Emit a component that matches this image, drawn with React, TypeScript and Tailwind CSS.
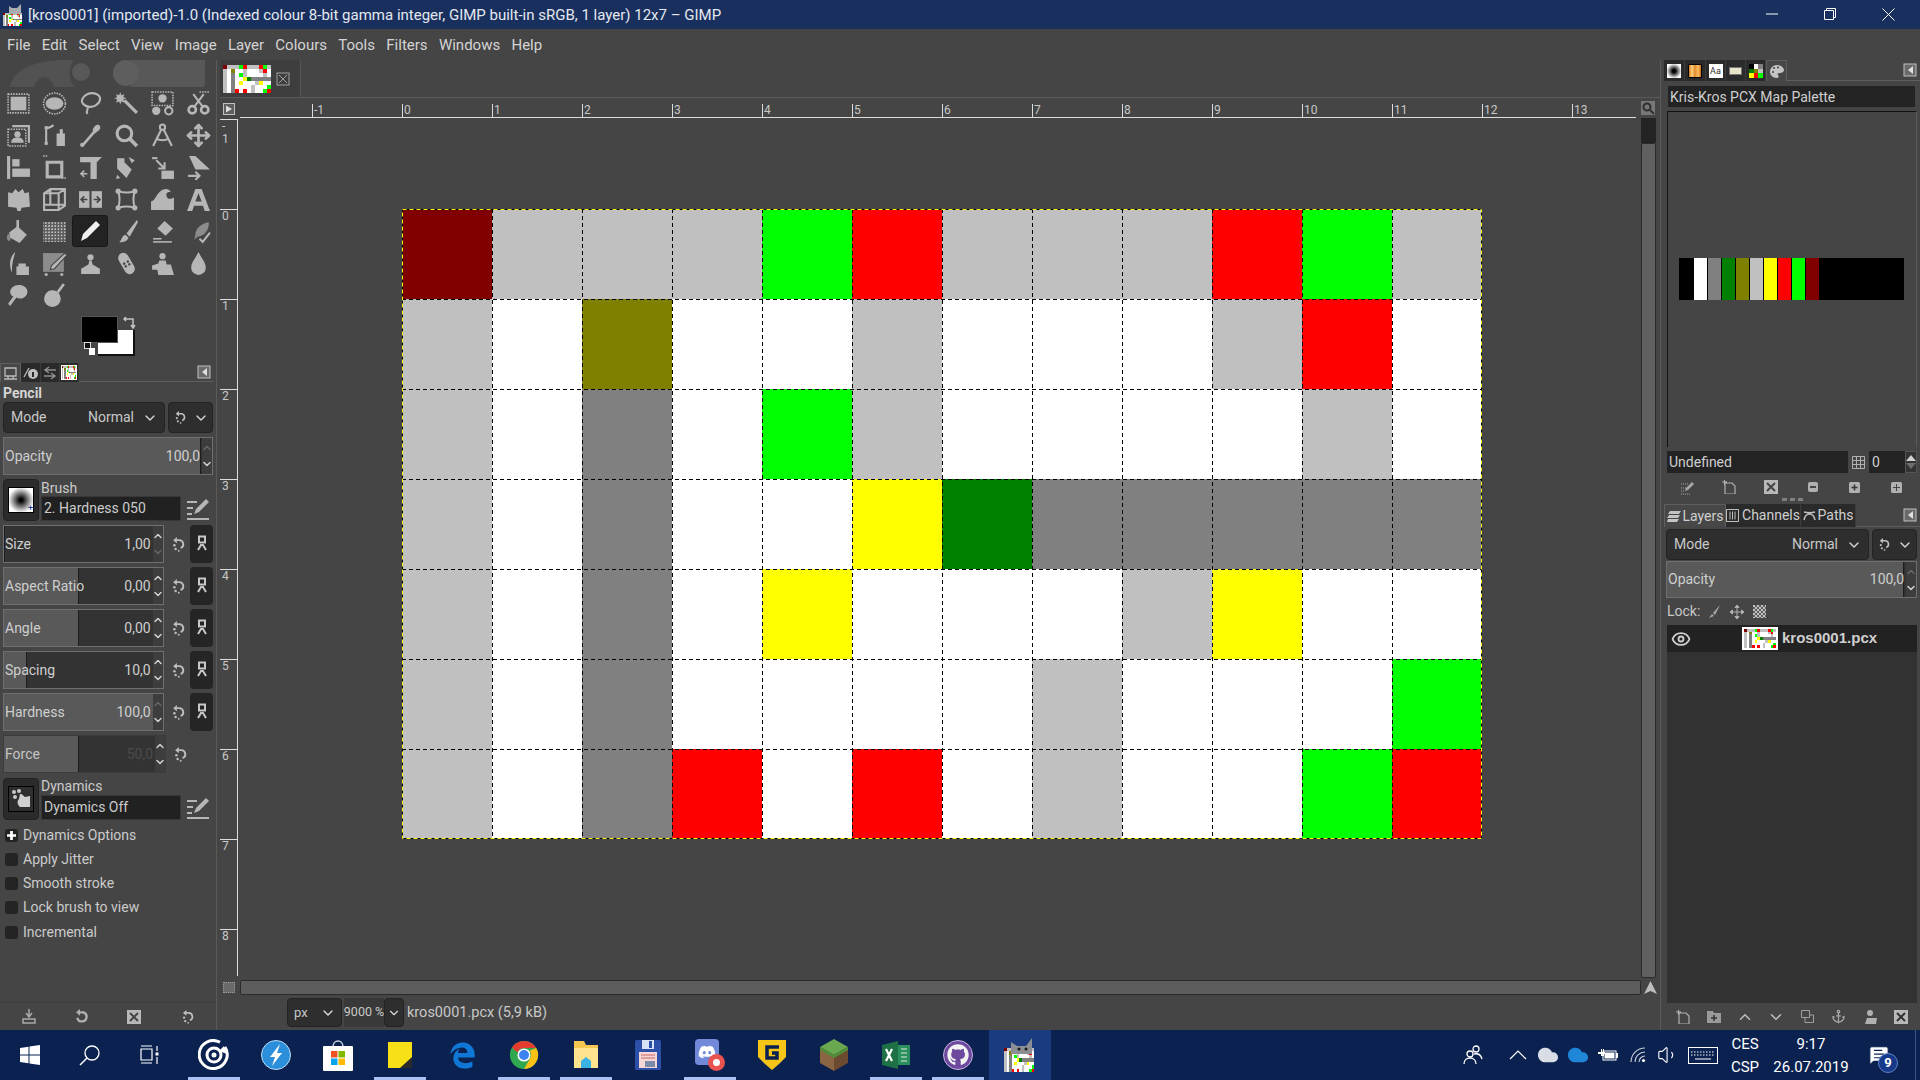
import React from "react";
import { ChevronDown, ChevronUp, Move, Eye, Cloud, Volume1, MessageSquareText, Anchor } from "lucide-react";
import { FaEdgeLegacy, FaDiscord, FaGithub } from "react-icons/fa6";

const M = "#800000", S = "#c0c0c0", W = "#ffffff", L = "#00ff00", R = "#ff0000", O = "#808000", A = "#808080", Y = "#ffff00", N = "#008000";

const MAP = [
  [M, S, S, S, L, R, S, S, S, R, L, S],
  [S, W, O, W, W, S, W, W, W, S, R, W],
  [S, W, A, W, L, S, W, W, W, W, S, W],
  [S, W, A, W, W, Y, N, A, A, A, A, A],
  [S, W, A, W, Y, W, W, W, S, Y, W, W],
  [S, W, A, W, W, W, W, S, W, W, W, L],
  [S, W, A, R, W, R, W, S, W, W, L, R],
];

const PALETTE = ["#000000", W, A, N, O, S, Y, R, L, M];
const MENU = ["File", "Edit", "Select", "View", "Image", "Layer", "Colours", "Tools", "Filters", "Windows", "Help"];
const G = "#b6b6b6";

// small picture of the map, used for the tab, the layer row and the taskbar
function Thumb({ w, h }: { w: number; h: number }) {
  return (
    <svg width={w} height={h} viewBox="0 0 12 7" preserveAspectRatio="none" shapeRendering="crispEdges" className="block shrink-0">
      {MAP.map((row, y) => row.map((c, x) => <rect key={`${x}-${y}`} x={x} y={y} width="1" height="1" fill={c} />))}
    </svg>
  );
}

function Ic({ children, size = 26 }: { children: React.ReactNode; size?: number }) {
  return (
    <svg viewBox="0 0 24 24" width={size} height={size} fill={G} className="block shrink-0">
      {children}
    </svg>
  );
}

const line = { fill: "none", stroke: G, strokeWidth: 2 };
const dash = { fill: "none", stroke: G, strokeWidth: 1.5, strokeDasharray: "1.5 1" };

const TOOLS: React.ReactNode[] = [
  <><rect x="2" y="3" width="20" height="18" {...dash} /><rect x="4.5" y="5.5" width="15" height="13" /></>,
  <><ellipse cx="12" cy="12" rx="8.5" ry="6" /><ellipse cx="12" cy="12" rx="10.5" ry="10" {...dash} /></>,
  <><path d="M13 2c6 0 9 3 8 7s-6 7-11 6-7-4-6-7 5-6 9-6z" {...line} /><path d="M9 15c2 2-2 3 0 7" {...line} /></>,
  <><path d="M10 9l12 12" stroke={G} strokeWidth="3" /><path d="M6 1l1 3 3-1-1 3 3 1-3 1 1 3-3-1-1 3-1-3-3 1 1-3-3-1 3-1-1-3 3 1z" /></>,
  <><rect x="2" y="1" width="20" height="13" {...dash} /><circle cx="12" cy="7" r="4" /><circle cx="6" cy="19" r="4" /><circle cx="18" cy="19" r="3.5" {...line} /></>,
  <><circle cx="6" cy="18" r="3.5" fill="none" stroke={G} strokeWidth="2.5" /><circle cx="18" cy="18" r="3.5" fill="none" stroke={G} strokeWidth="2.5" /><path d="M8 15L17 3M16 15L7 3" stroke={G} strokeWidth="2" /><path d="M13 1h10" {...dash} /></>,

  <><rect x="2" y="6" width="17" height="16" {...dash} /><path d="M6 3h16v16" {...line} /><circle cx="11" cy="11" r="3" /><path d="M5 19c0-4 3-5 6-5s6 1 6 5z" /></>,
  <><path d="M4 5v15M4 5c3 0 5-1 7-3" {...line} /><rect x="2.5" y="3" width="3" height="3" /><rect x="2.5" y="18" width="3" height="3" /><path d="M14 10h3V6h3v4h2v12h-8z" /></>,
  <><path d="M4 22L16 8" stroke={G} strokeWidth="2.5" /><path d="M14 7c1-4 4-6 6-5s2 4-1 6l-3 2z" /><circle cx="4" cy="21" r="2" /></>,
  <><circle cx="10" cy="10" r="7" fill="none" stroke={G} strokeWidth="3" /><path d="M15 15l7 7" stroke={G} strokeWidth="3.5" /></>,
  <><circle cx="12" cy="4" r="2.5" {...line} /><path d="M11 6L3 22M13 6l8 16" {...line} /><path d="M6 15c3 2 9 2 12 0" {...line} /></>,
  <Move size={24} color={G} strokeWidth={2.6} x={0} y={0} />,

  <><rect x="1" y="1" width="3" height="22" /><rect x="6" y="4" width="7" height="7" /><rect x="6" y="13" width="17" height="8" /></>,
  <><path d="M5 7h14v14H5z" fill="none" stroke={G} strokeWidth="3" /><path d="M1 1h5M19 22h4" {...dash} /></>,
  <><path d="M2 2h21l-5 5v16h-6V7H2z" /><path d="M2 18h7m-3-3l-3 3 3 3" stroke={G} fill="none" strokeWidth="1.5" /></>,
  <><path d="M3 3h7v4l7 7-5 8-9-9z" /><path d="M14 2l6 3-3 3zM3 19l3 3-4 1z" /></>,
  <><path d="M2 2h5v2H2z" /><path d="M6 5l8 8m0-6v6H8" {...line} /><rect x="11" y="15" width="12" height="8" /></>,
  <><path d="M3 1h6l14 13H9z" /><path d="M2 20h11m-4-4l4 4-4 4" {...line} /></>,

  <><path d="M2 5l4 1 3-4 3 3 4-3 2 4 4-1 1 14-8 1-1 3h-3l-1-3-8-1z" /></>,
  <><path d="M2 6l6-4h14v16l-6 4H2zM2 6h14v16M16 6l6-4M8 2v15H2M8 17h14" {...line} /></>,
  <><rect x="1" y="4" width="10" height="16" /><rect x="13" y="4" width="10" height="16" /><path d="M9 12H4m2-3l-3 3 3 3M15 12h5m-2-3l3 3-3 3" stroke="#454545" fill="none" strokeWidth="1.6" /></>,
  <><path d="M4 4c6 2 10 2 16 0-2 6-2 10 0 16-6-2-10-2-16 0 2-6 2-10 0-16z" {...line} /><circle cx="4" cy="4" r="2.5" /><circle cx="20" cy="4" r="2.5" /><circle cx="4" cy="20" r="2.5" /><circle cx="20" cy="20" r="2.5" /></>,
  <><path d="M1 22v-8c4-1 4-5 8-9 4-4 9-4 11 0-3-1-5 1-4 4s4 3 7 1v12z" /></>,
  <><path d="M9 2h6l8 21h-5l-1.700-5H7.700L6 23H1zM12 6l-3 8h6z" /></>,

  <><path d="M3 13l8-6 9 8-7 8-9-5z" /><rect x="10" y="1" width="2.500" height="12" /><path d="M2 14c-2 4-1 7 1 7s2-4-1-7z" fill="#8a8a8a" /></>,
  <><rect x="1" y="3" width="22" height="19" fill="url(#dith)" /><defs><pattern id="dith" width="3" height="3" patternUnits="userSpaceOnUse"><rect width="3" height="3" fill="#5e5e5e" /><rect width="1.500" height="1.500" fill="#c4c4c4" /></pattern></defs></>,
  <><path d="M18 2l4 4L9 19l-6 3 2-7z" fill="#f0f0f0" /></>,
  <><path d="M22 1L12 14l3 3L23 3z" /><path d="M11 15l3 3c-1 3-5 5-9 4 3-2 2-6 6-7z" /></>,
  <><path d="M14 2l8 7-7 7-8-7z" /><path d="M3 22h18" stroke={G} strokeWidth="1.500" /><path d="M3 19h8" stroke={G} strokeWidth="1.500" /></>,
  <><path d="M22 3c0 8-4 13-11 14l-3 3 1-5c0-6 6-11 13-12z" fill="#8c8c8c" /><path d="M13 19l3 3 7-9" {...line} /></>,

  <><path d="M9 1c-5 4-7 12-3 20-1-6 1-14 3-20z" /><path d="M12 12h7v3h3v8H10v-8h2z" /></>,
  <><path d="M1 2h20v18H1z" fill="#8c8c8c" /><path d="M22 2l2 2-12 13-4 1 1-4z" stroke="#454545" strokeWidth="1" /><circle cx="4" cy="22.500" r="1.500" /><circle cx="19" cy="22.500" r="1.500" /></>,
  <><circle cx="12" cy="6" r="3" /><path d="M11 9h2l1 4 7 4v5H3v-5l7-4z" /></>,
  <><g transform="rotate(-30 12 12)"><rect x="7" y="1" width="10" height="22" rx="5" /><circle cx="10" cy="11" r="1.200" fill="#454545" /><circle cx="14" cy="11" r="1.200" fill="#454545" /><circle cx="10" cy="14" r="1.200" fill="#454545" /><circle cx="14" cy="14" r="1.200" fill="#454545" /></g></>,
  <><circle cx="12" cy="5" r="3" /><path d="M9 9h6l1 4h4l3 10H8l-1-5H2v-4l6-2z" /></>,
  <><path d="M12 1c3 6 7 10 7 15a7 7 0 0 1-14 0c0-5 4-9 7-15z" /></>,

  <><path d="M4 9c0-5 5-8 10-7s8 5 6 9-7 5-10 3l-6 8-2-2 5-7c-2-1-3-3-3-4z" /></>,
  <><circle cx="10" cy="15" r="8" /><path d="M15 9l6-8" stroke={G} strokeWidth="2.500" /></>,
];

function Reset({ size = 18, color = "#bdbdbd" }: { size?: number; color?: string }) {
  return (
    <svg viewBox="0 0 24 24" width={size} height={size} className="block shrink-0">
      <path d="M9 5h6a6.500 6.500 0 0 1 2 12.600" fill="none" stroke={color} strokeWidth="3" />
      <path d="M11 0L5 5l6 5z" fill={color} />
      <circle cx="7" cy="13" r="2" fill={color} />
      <circle cx="9" cy="19" r="2" fill={color} />
      <circle cx="14" cy="22" r="1.500" fill={color} />
    </svg>
  );
}

function EditIcon() {
  return (
    <svg viewBox="0 0 24 24" width={24} height={24} className="block shrink-0">
      <path d="M1 5h10M1 11h6M1 17h5M1 22h22" stroke={G} strokeWidth="2.200" />
      <path d="M20 2l3 3-10 10-5 2 2-5z" fill={G} />
    </svg>
  );
}

function ConfigureBtn() {
  return (
    <svg viewBox="0 0 14 14" width={14} height={14} className="block shrink-0">
      <rect x="1" y="1" width="12" height="12" fill="#6a6a6a" stroke="#c0c0c0" />
      <path d="M10 3v8L5 7z" fill="#e0e0e0" />
    </svg>
  );
}

function Spin({ dimUp, dimDown }: { dimUp?: boolean; dimDown?: boolean }) {
  return (
    <div className="w-[10px] shrink-0 flex flex-col items-center justify-center bg-[#3d3d3d] h-full">
      <ChevronUp size={12} strokeWidth={3} color={dimUp ? "#666666" : "#d0d0d0"} />
      <div className="h-[4px]" />
      <ChevronDown size={12} strokeWidth={3} color={dimDown ? "#666666" : "#d0d0d0"} />
    </div>
  );
}

function Slider({ label, value, fill, dim, dimUp, dimDown }: { label: string; value: string; fill: number; dim?: boolean; dimUp?: boolean; dimDown?: boolean }) {
  return (
    <div className={`relative flex items-center w-full h-full bg-[#333333] border ${dim ? "border-[#3b3b3b] bg-[#3c3c3c]" : "border-[#6f6f6f]"}`}>
      <div className="absolute left-0 top-0 bottom-0 bg-[#595959] border-r border-[#1d1d1d]" style={{ width: fill }} />
      <div className={`relative flex-1 flex justify-between items-center pl-[1px] pr-[2px] text-[14px] ${dim ? "text-[#c4c4c4]" : "text-[#cfcfcf]"}`}>
        <span className="whitespace-nowrap">{label}</span>
        <span className={dim ? "text-[#4c4c4c]" : ""}>{value}</span>
      </div>
      <div className="relative h-full flex"><Spin dimUp={dimUp} dimDown={dimDown} /></div>
    </div>
  );
}

function LinkBtn() {
  return (
    <div className="w-[23px] h-full rounded-[4px] bg-[#252525] flex items-center justify-center">
      <svg viewBox="0 0 10 18" width={10} height={18}>
        <rect x="2" y="1.500" width="6" height="6" fill="none" stroke="#c8c8c8" strokeWidth="2" />
        <path d="M1 15l3-5h2l3 5" fill="none" stroke="#c8c8c8" strokeWidth="2" />
      </svg>
    </div>
  );
}

function ParamRow({ label, value, fill, up, down, link = true, dim }: { label: string; value: string; fill: number; up?: boolean; down?: boolean; link?: boolean; dim?: boolean }) {
  return (
    <div className="flex items-center h-[38px] mt-[4px]">
      <div className="w-[163px] h-full"><Slider label={label} value={value} fill={fill} dimUp={up} dimDown={down} dim={dim} /></div>
      <div className="w-[27px] flex justify-center"><Reset size={15} /></div>
      {link && <LinkBtn />}
    </div>
  );
}

function ModeRow() {
  return (
    <div className="flex gap-[3px] h-[31px]">
      <div className="flex-1 rounded-[4px] bg-[#2e2e2e] border border-[#232323] flex items-center justify-between pl-[7px] pr-[6px] text-[14px] text-[#c8c8c8]">
        <span>Mode</span>
        <span className="flex items-center gap-[8px]">Normal <ChevronDown size={16} color="#d8d8d8" /></span>
      </div>
      <div className="w-[45px] rounded-[4px] bg-[#2e2e2e] border border-[#232323] flex items-center justify-center gap-[7px]">
        <Reset size={13} /><ChevronDown size={16} color="#d8d8d8" />
      </div>
    </div>
  );
}

function Tab({ active, children, w }: { active?: boolean; children: React.ReactNode; w: string }) {
  return (
    <div className={`${w} h-full flex items-center justify-center ${active ? "bg-[#474747] border border-b-0 border-[#5e5e5e]" : "bg-[#2a2a2a] border-r border-[#3c3c3c]"}`}>
      {children}
    </div>
  );
}

function Check({ label, on }: { label: string; on?: boolean }) {
  return (
    <div className="flex items-center h-[24.250px] pl-[2px] gap-[5px] text-[14px] text-[#cbcbcb]">
      <span className="w-[13px] h-[13px] rounded-[3px] bg-[#232323] flex items-center justify-center">
        {on && <svg viewBox="0 0 10 10" width={9} height={9}><path d="M3.500 0h3v3.500H10v3H6.500V10h-3V6.500H0v-3h3.500z" fill="#ffffff" /></svg>}
      </span>
      {label}
    </div>
  );
}

function LeftDock() {
  return (
    <div className="w-[216px] shrink-0 flex flex-col">
      {/* wilber ghost above the tools */}
      <div className="h-[27px] pl-[10px] overflow-hidden">
        <svg width="195" height="27" viewBox="0 0 195 27">
          <path d="M0 27C4 8 24 2 50 0h14c-6 8-6 18 0 27H44C40 14 28 14 24 27z" fill="#525252" />
          <circle cx="71" cy="12" r="9" fill="#585858" />
          <path d="M88 0h112l-6 27H120a18 18 0 0 0-28-27z" fill="#585858" />
          <circle cx="116" cy="13" r="13" fill="#5e5e5e" />
        </svg>
      </div>

      <div className="grid grid-cols-[repeat(6,36px)] auto-rows-[32px]">
        {TOOLS.map((t, i) => (
          <div key={i} className={`flex items-center justify-center rounded-[3px] ${i === 26 ? "bg-[#232323] border border-[#191919]" : ""}`}>
            <Ic size={i === 26 ? 24 : 25}>{t}</Ic>
          </div>
        ))}
      </div>

      {/* foreground and background colours */}
      <div className="relative h-[52px]">
        <div className="absolute left-[98px] top-[19px] w-[37px] h-[26px] bg-white border-b-2 border-r-2 border-[#111111]" />
        <div className="absolute left-[81px] top-[5px] w-[37px] h-[27px] bg-black border border-[#555555]" />
        <svg className="absolute left-[123px] top-[5px]" width="13" height="13" viewBox="0 0 13 13">
          <path d="M1 3h9v8M8 9l2 3 2-3M3 1L1 3l2 2" fill="none" stroke="#c4c4c4" strokeWidth="1.500" />
        </svg>
        <div className="absolute left-[84px] top-[31px] w-[7px] h-[7px] bg-[#111111] border border-[#dddddd]" />
        <div className="absolute left-[89px] top-[37px] w-[6px] h-[7px] bg-white" />
      </div>

      <div className="h-[19px] flex items-stretch pr-[2px]">
        <Tab active w="w-[21px]">
          <svg width="15" height="15" viewBox="0 0 15 15"><path d="M2 2h11v8H2zM1 13h13M5 10v3M10 10v3" fill="none" stroke="#bcbcbc" strokeWidth="1.300" /></svg>
        </Tab>
        <Tab w="w-[20px]">
          <svg width="16" height="14" viewBox="0 0 16 14"><path d="M1 11L6 2" stroke="#b0b0b0" strokeWidth="1.500" /><circle cx="10" cy="8" r="5" fill="#c0c0c0" /><rect x="9" y="6" width="2" height="5" fill="#2a2a2a" /></svg>
        </Tab>
        <Tab w="w-[19px]">
          <svg width="14" height="14" viewBox="0 0 14 14"><path d="M13 4H3m3-3L2 4l4 3M1 10h10m-3-3l4 3-4 3" fill="none" stroke="#8f8f8f" strokeWidth="1.500" /></svg>
        </Tab>
        <Tab w="w-[19px]"><div className="bg-white p-[1px]"><Thumb w={14} h={13} /></div></Tab>
        <div className="flex-1 flex justify-end items-center pr-[3px] border-b border-[#5e5e5e]"><ConfigureBtn /></div>
      </div>

      <div className="flex-1 flex flex-col px-[3px] text-[#cbcbcb]">
        <div className="h-[20px] text-[14px] font-bold leading-[22px] text-[#d4d4d4]">Pencil</div>
        <ModeRow />
        <div className="h-[38px] mt-[4px]"><Slider label="Opacity" value="100,0" fill={197} dimUp /></div>

        <div className="flex h-[42px] mt-[4px] gap-[2px]">
          <div className="w-[36px] rounded-[4px] bg-[#2b2b2b] border border-[#222222] flex items-center justify-center">
            <div className="relative w-[26px] h-[26px] bg-[radial-gradient(circle,#000000_8%,#ffffff_75%)] border border-black">
              <span className="absolute right-0 bottom-0 text-[9px] leading-[8px] text-[#1a2f8f]">+</span>
            </div>
          </div>
          <div className="flex-1 flex flex-col text-[14px]">
            <div className="h-[17px] leading-[18px]">Brush</div>
            <div className="flex items-center">
              <div className="w-[140px] h-[25px] bg-[#212121] border border-[#383838] pl-[2px] leading-[23px]">2. Hardness 050</div>
              <div className="ml-[5px]"><EditIcon /></div>
            </div>
          </div>
        </div>

        <ParamRow label="Size" value="1,00" fill={0} down />
        <ParamRow label="Aspect Ratio" value="0,00" fill={75} />
        <ParamRow label="Angle" value="0,00" fill={75} />
        <ParamRow label="Spacing" value="10,0" fill={23} />
        <ParamRow label="Hardness" value="100,0" fill={150} up />
        <ParamRow label="Force" value="50,0" fill={75} link={false} dim />

        <div className="flex h-[42px] mt-[5px] gap-[2px]">
          <div className="w-[36px] rounded-[4px] bg-[#2b2b2b] border border-[#222222] flex items-center justify-center">
            <div className="w-[26px] h-[26px] bg-[#2f2f2f] border border-black flex items-center justify-center">
              <svg width="22" height="22" viewBox="0 0 22 22"><circle cx="4" cy="4" r="2" fill="#c8c8c8" /><circle cx="9" cy="3" r="2" fill="#c8c8c8" /><circle cx="5" cy="9" r="2" fill="#c8c8c8" /><path d="M10 6c3 0 3 2 5 3l5-1v11H10c-3-3-3-6-1-8z" fill="#d0d0d0" /></svg>
            </div>
          </div>
          <div className="flex-1 flex flex-col text-[14px]">
            <div className="h-[17px] leading-[16px]">Dynamics</div>
            <div className="flex items-center">
              <div className="w-[140px] h-[25px] bg-[#212121] border border-[#383838] pl-[2px] leading-[23px]">Dynamics Off</div>
              <div className="ml-[5px]"><EditIcon /></div>
            </div>
          </div>
        </div>

        <div className="mt-[3px]">
          <Check label="Dynamics Options" on />
          <Check label="Apply Jitter" />
          <Check label="Smooth stroke" />
          <Check label="Lock brush to view" />
          <Check label="Incremental" />
        </div>
      </div>

      <div className="h-[28px] shrink-0 grid grid-cols-4 px-[3px] items-center justify-items-center border-t border-[#3f3f3f]">
        <svg width="14" height="15" viewBox="0 0 14 15"><path d="M7 0v7m-3-3l3 4 3-4M1 10h12v4H1z" stroke="#a8a8a8" strokeWidth="1.500" fill="none" /></svg>
        <svg width="16" height="16" viewBox="0 0 24 24"><path d="M6 5h8a7 7 0 1 1-9 8" fill="none" stroke="#b0b0b0" strokeWidth="3.500" /><path d="M9 0L3 5l6 5z" fill="#b0b0b0" /></svg>
        <svg width="14" height="14" viewBox="0 0 14 14"><rect width="14" height="14" fill="#b8b8b8" /><path d="M3 3l8 8M11 3l-8 8" stroke="#454545" strokeWidth="2" /></svg>
        <Reset size={14} />
      </div>
    </div>
  );
}

function Sash() {
  return <div className="w-[4px] shrink-0 border-l border-[#5a5a5a]" />;
}

function Canvas() {
  const v: React.ReactNode[] = [];
  for (let i = 1; i < 12; i++) v.push(<path key={`v${i}`} d={`M${i * 90 + 0.5} 0V630`} />);
  for (let i = 1; i < 7; i++) v.push(<path key={`h${i}`} d={`M0 ${i * 90 + 0.5}H1080`} />);
  return (
    <div className="relative w-[1080px] h-[630px] grid grid-cols-[repeat(12,90px)] auto-rows-[90px]">
      {MAP.flat().map((c, i) => (
        <div key={i} style={{ backgroundColor: c }} />
      ))}
      {/* selection and layer boundary */}
      <svg className="absolute inset-0" width="1080" height="630" fill="none" stroke="#000000" strokeDasharray="4 3">
        {v}
        <rect x="0.500" y="0.500" width="1079" height="629" stroke="#000000" strokeDasharray="none" />
        <rect x="0.500" y="0.500" width="1079" height="629" stroke="#ffff00" />
      </svg>
    </div>
  );
}

function ConfigureTri() {
  return (
    <svg viewBox="0 0 12 12" width={12} height={12}>
      <rect x="0.500" y="0.500" width="11" height="11" fill="#5f5f5f" stroke="#c0c0c0" />
      <path d="M3 2.500v7L9 6z" fill="#dddddd" />
    </svg>
  );
}

function Center() {
  const hMarks = ["-1", "0", "1", "2", "3", "4", "5", "6", "7", "8", "9", "10", "11", "12", "13"];
  const vMarks = ["", "0", "1", "2", "3", "4", "5", "6", "7", "8"];
  return (
    <div className="flex-1 min-w-0 flex flex-col">
      <div className="h-[38px] shrink-0 flex border-b border-[#5a5a5a]">
        <div className="w-[81px] bg-[#3e3e3e] border-r border-[#555555] flex items-center pl-[3px]">
          <Thumb w={48} h={28} />
          <svg width="14" height="14" viewBox="0 0 14 14" className="ml-[5px]"><rect x="1" y="1" width="12" height="12" fill="none" stroke="#a0a0a0" /><path d="M3 3l8 8M11 3l-8 8" stroke="#a0a0a0" /></svg>
        </div>
      </div>

      {/* top ruler */}
      <div className="h-[20px] shrink-0 flex">
        <div className="w-[20px] flex items-center pl-[3px] pt-[1px]"><ConfigureTri /></div>
        <div className="flex-1 min-w-0 flex overflow-hidden">
          <div className="w-[72px] shrink-0 border-b border-[#dcdcdc] self-end h-px" />
          {hMarks.map((m) => (
            <div key={m} className="w-[90px] shrink-0 h-[14px] self-end border-l border-b border-l-[#dcdcdc] border-b-[#dcdcdc] pl-px text-[12px] leading-[13px] text-[#c8c8c8]">{m}</div>
          ))}
        </div>
        <div className="w-[24px] shrink-0 flex items-center justify-end pr-[5px]">
          <svg width="14" height="14" viewBox="0 0 14 14"><rect width="14" height="14" fill="#777777" /><circle cx="6" cy="6" r="3.500" fill="none" stroke="#2e2e2e" strokeWidth="2" /><path d="M9 9l4 4" stroke="#2e2e2e" strokeWidth="2" /></svg>
        </div>
      </div>

      <div className="flex-1 min-h-0 flex">
        {/* left ruler */}
        <div className="w-[18px] shrink-0 border-r border-[#dcdcdc] mt-px mb-[2px] overflow-hidden">
          {vMarks.map((m, i) => (
            <div key={i} className={`h-[90px] border-t border-[#dcdcdc] pl-[2px] text-[12px] leading-[13px] text-[#c8c8c8] ${m === "" ? "leading-[10px]" : ""}`}>
              {m === "" ? <><div>-</div><div>1</div></> : m}
            </div>
          ))}
        </div>
        <div className="flex-1 min-w-0 pl-[164px] pt-[91px] overflow-hidden">
          <Canvas />
        </div>
        <div className="w-[15px] shrink-0 mr-[4px] flex flex-col">
          <div className="h-[25px] bg-[#232323]" />
          <div className="flex-1 bg-[#606060] rounded-[2px] border border-[#2a2a2a]" />
        </div>
      </div>

      <div className="h-[16px] shrink-0 flex items-center mt-px">
        <div className="w-[20px] flex items-center pl-[3px]"><div className="w-[12px] h-[11px] bg-[#6a6a6a] border border-dotted border-[#9a9a9a]" /></div>
        <div className="flex-1 h-[15px] bg-[#5d5d5d] border border-[#2a2a2a] rounded-[2px]" />
        <div className="w-[19px] flex justify-center">
          <svg width="13" height="13" viewBox="0 0 13 13"><path d="M6.500 0L13 13l-6.500-3L0 13z" fill="#bdbdbd" /></svg>
        </div>
      </div>

      {/* status bar */}
      <div className="h-[35px] shrink-0 flex items-center pl-[67px] text-[14.500px] text-[#c8c8c8]">
        <div className="w-[55px] h-[29px] rounded-[4px] bg-[#2e2e2e] border border-[#232323] flex items-center justify-between pl-[6px] pr-[5px] text-[13px]">
          px <ChevronDown size={16} color="#dddddd" />
        </div>
        <div className="w-[40px] h-[29px] ml-[2px] bg-[#393939] flex items-center justify-center text-[12.500px] whitespace-nowrap">9000 %</div>
        <div className="w-[20px] h-[29px] rounded-[4px] bg-[#2e2e2e] border border-[#232323] flex items-center justify-center"><ChevronDown size={14} color="#dddddd" /></div>
        <span className="ml-[3px] pt-px">kros0001.pcx (5,9 kB)</span>
      </div>
    </div>
  );
}

function SmallBtn({ children }: { children: React.ReactNode }) {
  return <div className="flex items-center justify-center">{children}</div>;
}

function RightDock() {
  return (
    <div className="flex-1 min-w-0 flex flex-col">
      <div className="h-[21px] shrink-0 flex items-stretch">
        <Tab w="w-[21px]"><div className="w-[14px] h-[14px] bg-[radial-gradient(circle,#000000_15%,#ffffff_75%)]" /></Tab>
        <Tab w="w-[21px]"><div className="w-[14px] h-[14px] bg-[linear-gradient(90deg,#d07a20,#ffd27a,#e08a30,#ffc060,#c87020)] border border-black" /></Tab>
        <Tab w="w-[20px]"><div className="w-[14px] h-[14px] bg-white text-[9px] leading-[14px] text-center text-[#333333]">Aa</div></Tab>
        <Tab w="w-[20px]"><div className="w-[13px] h-[8px] bg-[#e8e4c8] border border-[#777777]" /></Tab>
        <Tab w="w-[20px]">
          <svg width="14" height="14" viewBox="0 0 3 3" shapeRendering="crispEdges"><rect width="1" height="1" fill="#000000" /><rect x="1" width="1" height="1" fill="#ffffff" /><rect x="2" width="1" height="1" fill="#808080" /><rect y="1" width="1" height="1" fill="#008000" /><rect x="1" y="1" width="1" height="1" fill="#808000" /><rect x="2" y="1" width="1" height="1" fill="#c0c0c0" /><rect y="2" width="1" height="1" fill="#ffff00" /><rect x="1" y="2" width="1" height="1" fill="#ff0000" /><rect x="2" y="2" width="1" height="1" fill="#00ff00" /></svg>
        </Tab>
        <Tab active w="w-[21px]">
          <svg width="14" height="15" viewBox="0 0 14 15"><path d="M7 1C2 1 0 5 0 8s3 6 7 6c2 0 2-2 1-3s0-2 2-2 4-1 4-3-3-5-7-5z" fill="#c4c4c4" /><circle cx="4" cy="4" r="1" fill="#454545" /><circle cx="8" cy="3.500" r="1" fill="#454545" /><circle cx="3" cy="8" r="1" fill="#454545" /></svg>
        </Tab>
        <div className="flex-1 flex justify-end items-center pr-[3px] border-b border-[#5e5e5e]"><ConfigureBtn /></div>
      </div>

      <div className="h-[21px] shrink-0 mt-[5px] ml-[4px] mr-[5px] bg-[#232323] pl-[2px] text-[14px] leading-[22px] text-[#cfcfcf]">Kris-Kros PCX Map Palette</div>

      <div className="h-[336px] shrink-0 mt-[4px] ml-[3px] mr-[3px] border-t border-l border-[#111111] border-r-[#5a5a5a] border-r pt-[146px] pl-[11px]">
        <div className="w-[225px] h-[42px] bg-black flex pl-[15px] gap-px">
          {PALETTE.slice(1).map((c) => (
            <div key={c} className="w-[13px] h-full" style={{ backgroundColor: c }} />
          ))}
        </div>
      </div>

      <div className="h-[22px] shrink-0 mt-[4px] flex items-center ml-[3px] mr-[3px] text-[14px] text-[#cfcfcf]">
        <div className="w-[181px] h-full bg-[#232323] pl-[2px] leading-[22px]">Undefined</div>
        <div className="w-[21px] flex justify-center">
          <svg width="13" height="13" viewBox="0 0 13 13"><path d="M.5.5h12v12H.5zM4.500.5v12M8.500.500v12M.5 4.500h12M.5 8.500h12" fill="none" stroke="#b0b0b0" /></svg>
        </div>
        <div className="w-[36px] h-full bg-[#232323] pl-[3px] leading-[22px]">0</div>
        <div className="flex-1 h-full bg-[#333333] border border-[#555555] flex flex-col items-center justify-center">
          <svg width="10" height="6" viewBox="0 0 10 6"><path d="M5 0l5 6H0z" fill="#d0d0d0" /></svg>
          <div className="h-[2px]" />
          <svg width="10" height="6" viewBox="0 0 10 6"><path d="M5 6L0 0h10z" fill="#6d6d6d" /></svg>
        </div>
      </div>

      <div className="h-[28px] shrink-0 grid grid-cols-6 ml-[3px] mr-[3px] items-center">
        <SmallBtn><svg width="15" height="15" viewBox="0 0 15 15"><path d="M1 4h8M1 8h5M1 11h4M1 14h10" stroke="#a8a8a8" strokeDasharray="1 1" /><path d="M12 2l2 2-6 6-3 1 1-3z" fill="#a8a8a8" /></svg></SmallBtn>
        <SmallBtn><svg width="14" height="14" viewBox="0 0 14 14"><path d="M3 3h7l3 3v8H3zM0 2h5M2.500 0v5" fill="none" stroke="#b0b0b0" strokeWidth="1.200" /></svg></SmallBtn>
        <SmallBtn><svg width="14" height="14" viewBox="0 0 14 14"><rect width="14" height="14" fill="#b8b8b8" /><path d="M3 3l8 8M11 3l-8 8" stroke="#454545" strokeWidth="2" /></svg></SmallBtn>
        <SmallBtn><div className="w-[10px] h-[10px] bg-[#b0b0b0] rounded-[2px] flex items-center justify-center"><div className="w-[6px] h-[2px] bg-[#454545]" /></div></SmallBtn>
        <SmallBtn><svg width="11" height="11" viewBox="0 0 11 11"><rect width="11" height="11" rx="1.500" fill="#b0b0b0" /><path d="M5.500 2.500v6M2.500 5.500h6" stroke="#333333" strokeWidth="1.500" /></svg></SmallBtn>
        <SmallBtn><svg width="11" height="11" viewBox="0 0 11 11"><rect width="11" height="11" rx="1.500" fill="#b0b0b0" /><path d="M5.500 2v7M2 5.500h7" stroke="#454545" /></svg></SmallBtn>
      </div>

      <div className="h-[3px] flex items-center justify-center gap-[3px] mt-[-3px] mb-[3px]">
        <div className="w-[5px] h-[3px] bg-[#808080]" /><div className="w-[5px] h-[3px] bg-[#808080]" /><div className="w-[5px] h-[3px] bg-[#808080]" />
      </div>

      <div className="h-[23px] shrink-0 flex items-stretch text-[14px] text-[#cfcfcf]">
        <Tab active w="w-[62px]"><span className="flex items-center gap-[2px]">
          <svg width="14" height="14" viewBox="0 0 14 14"><path d="M3 2h11l-2 3H1zM2 6h11l-2 3H0zM1 10h11l-2 3H0z" fill="#c4c4c4" /></svg>Layers</span></Tab>
        <Tab w="w-[75px]"><span className="flex items-center gap-[3px]">
          <svg width="13" height="13" viewBox="0 0 13 13"><path d="M.5.5h12v12H.5zM4 2.500v8M6.500 2.500v8M9 2.500v8" fill="none" stroke="#c0c0c0" /></svg>Channels</span></Tab>
        <Tab w="w-[55px]"><span className="flex items-center gap-[2px]">
          <svg width="13" height="11" viewBox="0 0 13 11"><path d="M1 2c4 1 7 1 11 0M1 10c1-5 3-6 5.500-6S11 5 12 10" fill="none" stroke="#c0c0c0" strokeWidth="1.500" /></svg>Paths</span></Tab>
        <div className="flex-1 flex justify-end items-center pr-[3px] border-b border-[#5e5e5e]"><ConfigureBtn /></div>
      </div>

      <div className="px-[2px] pr-[3px] mt-[2px]"><ModeRow /></div>
      <div className="h-[37px] shrink-0 mx-[2px] mr-[3px] mt-px"><Slider label="Opacity" value="100,0" fill={237} dimUp /></div>

      <div className="h-[27px] shrink-0 flex items-center ml-[3px] text-[14px] text-[#c8c8c8]">
        Lock:
        <svg className="ml-[8px]" width="13" height="13" viewBox="0 0 13 13"><path d="M12 0L5 8l2 2zM4 9l2 2-5 2z" fill="#a8a8a8" /></svg>
        <svg className="ml-[9px]" width="14" height="14" viewBox="0 0 14 14"><path d="M7 0v14M0 7h14M7 0L5 2.500h4zM7 14l-2-2.500h4zM0 7l2.500-2v4zM14 7l-2.500-2v4z" stroke="#b0b0b0" fill="#b0b0b0" /></svg>
        <svg className="ml-[9px]" width="13" height="13" viewBox="0 0 13 13"><rect width="13" height="13" fill="url(#lock)" /><defs><pattern id="lock" width="4" height="4" patternUnits="userSpaceOnUse"><rect width="4" height="4" fill="#606060" /><rect width="2" height="2" fill="#c0c0c0" /><rect x="2" y="2" width="2" height="2" fill="#c0c0c0" /></pattern></defs></svg>
      </div>

      <div className="flex-1 min-h-0 mx-[3px] bg-[#323232] flex flex-col">
        <div className="h-[27px] shrink-0 bg-[#222222] flex items-center text-[15px] font-bold text-[#cfcfcf]">
          <div className="w-[28px] flex justify-center"><Eye size={20} color="#cfcfcf" strokeWidth={2.200} /></div>
          <div className="ml-[47px] bg-white p-[2px] mr-[4px]"><Thumb w={32} h={19} /></div>
          <span className="font-['Liberation_Sans',sans-serif]">kros0001.pcx</span>
        </div>
      </div>

      <div className="h-[27px] shrink-0 grid grid-cols-8 mx-[3px] items-center justify-items-center">
        <svg width="14" height="14" viewBox="0 0 14 14"><path d="M3 3h7l3 3v8H3zM0 2h5M2.500 0v5" fill="none" stroke="#b0b0b0" strokeWidth="1.200" /></svg>
        <svg width="14" height="13" viewBox="0 0 14 13"><path d="M0 1h6l1 2h7v10H0z" fill="#9a9a9a" /><path d="M7 5v6M4 8h6" stroke="#333333" strokeWidth="1.500" /></svg>
        <ChevronUp size={18} color="#bdbdbd" />
        <ChevronDown size={18} color="#bdbdbd" />
        <svg width="13" height="13" viewBox="0 0 13 13"><path d="M.5.5h8v7h-8zM4 8v4.500h8.500V5H9" fill="none" stroke="#a0a0a0" /></svg>
        <Anchor size={15} color="#a8a8a8" />
        <svg width="15" height="14" viewBox="0 0 15 14"><circle cx="7" cy="3" r="3" fill="#b0b0b0" /><path d="M2 14l2-6h10l-1 6z" fill="#b0b0b0" /></svg>
        <svg width="14" height="14" viewBox="0 0 14 14"><rect width="14" height="14" fill="#b8b8b8" /><path d="M3 3l8 8M11 3l-8 8" stroke="#323232" strokeWidth="2" /></svg>
      </div>
    </div>
  );
}

function WinLogo() {
  return (
    <svg width="20" height="20" viewBox="0 0 20 20"><path d="M0 3l8.500-1.200v7.700H0zM9.500 1.600L20 0v9.500H9.500zM0 10.500h8.500v7.700L0 17zM9.500 10.500H20V20L9.500 18.400z" fill="#ffffff" /></svg>
  );
}

function TaskItem({ active, current, children }: { active?: boolean; current?: boolean; children: React.ReactNode }) {
  return (
    <div className={`relative w-[62px] shrink-0 h-full flex items-center justify-center ${current ? "bg-[#1b3b80]" : ""}`}>
      {children}
      {active && <div className="absolute bottom-0 left-[5px] right-[5px] h-[3px] bg-[#a9c2f3]" />}
    </div>
  );
}

function Taskbar() {
  return (
    <div className="h-[50px] shrink-0 bg-[#0b2250] flex items-stretch text-white">
      <div className="w-[60px] flex items-center justify-center"><WinLogo /></div>
      <div className="w-[60px] flex items-center justify-center">
        <svg width="22" height="22" viewBox="0 0 22 22"><circle cx="13" cy="9" r="7" fill="none" stroke="#ffffff" strokeWidth="1.300" /><path d="M8 14l-7 7" stroke="#ffffff" strokeWidth="1.400" /></svg>
      </div>
      <div className="w-[60px] flex items-center justify-center">
        <svg width="20" height="20" viewBox="0 0 20 20"><path d="M1 4h11v11H1zM1 1h11M1 18h11M17 1v5M17 12v7" fill="none" stroke="#ffffff" strokeWidth="1.200" /><rect x="15.500" y="7.500" width="3" height="3" fill="#ffffff" /></svg>
      </div>
      <div className="flex ml-[3px]">
        <TaskItem active>
          <svg width="32" height="32" viewBox="0 0 32 32"><path d="M27 8a14 14 0 1 1-5-4.700" fill="none" stroke="#ffffff" strokeWidth="3" /><path d="M29 15l-3-8-5 5z" fill="#ffffff" /><circle cx="16" cy="16" r="7" fill="none" stroke="#ffffff" strokeWidth="3" /><circle cx="16" cy="16" r="2.500" fill="#ffffff" /></svg>
        </TaskItem>
        <TaskItem>
          <svg width="30" height="30" viewBox="0 0 30 30"><circle cx="15" cy="15" r="14.500" fill="#2b8fdb" stroke="#bcdcf5" /><path d="M19 4L9 17h5l-3 9 10-13h-5z" fill="#ffffff" /></svg>
        </TaskItem>
        <TaskItem>
          <svg width="30" height="31" viewBox="0 0 30 31"><path d="M10 7c0-8 10-8 10 0" fill="none" stroke="#c8d2de" strokeWidth="1.500" /><rect y="6" width="30" height="25" fill="#ffffff" rx="1" /><rect x="8" y="11" width="6.500" height="6.500" fill="#f25022" /><rect x="15.500" y="11" width="6.500" height="6.500" fill="#7fba00" /><rect x="8" y="18.500" width="6.500" height="6.500" fill="#00a4ef" /><rect x="15.500" y="18.500" width="6.500" height="6.500" fill="#ffb900" /></svg>
        </TaskItem>
        <TaskItem active>
          <svg width="24" height="26" viewBox="0 0 24 26"><rect width="24" height="26" fill="#f8e016" /><path d="M24 15v11H12z" fill="#2a2a2a" /></svg>
        </TaskItem>
        <TaskItem><FaEdgeLegacy size={27} color="#0f78d6" /></TaskItem>
        <TaskItem active>
          <svg width="30" height="30" viewBox="0 0 32 32">
            <circle cx="16" cy="16" r="15" fill="#2fa84f" />
            <path d="M16 1a15 15 0 0 1 13 7.500H16a7.500 7.500 0 0 0-7 4.800L3.200 8A15 15 0 0 1 16 1z" fill="#e53b30" />
            <path d="M29 8.500A15 15 0 0 1 16 31l6.500-11.200A7.500 7.500 0 0 0 22 11.500z" fill="#fbc116" />
            <circle cx="16" cy="16" r="7" fill="#ffffff" />
            <circle cx="16" cy="16" r="5.300" fill="#3c82f0" />
          </svg>
        </TaskItem>
        <TaskItem active>
          <svg width="26" height="28" viewBox="0 0 26 28"><path d="M1 0h10l2 4h12v20H1z" fill="#f4c750" /><rect x="1" y="7" width="24" height="20" fill="#ffe38e" /><path d="M8 27v-7l5-4 5 4v7z" fill="#3ab2e6" /></svg>
        </TaskItem>
        <TaskItem>
          <svg width="26" height="30" viewBox="0 0 26 30"><rect width="26" height="30" rx="1.500" fill="#2c4fa8" /><rect x="7" y="0" width="12" height="9" fill="#d8e4f4" /><rect x="14" y="1" width="3" height="7" fill="#2c4fa8" /><rect x="4" y="12" width="18" height="16" fill="#f4d8d8" /><path d="M6 15h14M6 18h14" stroke="#d06060" /><rect x="10" y="21" width="10" height="6" fill="#7a8ca8" /></svg>
        </TaskItem>
        <TaskItem active>
          <div className="relative w-[30px] h-[32px] flex items-start justify-start">
            <div className="w-[24px] h-[26px] rounded-[4px] bg-[#7289da] flex items-center justify-center"><FaDiscord size={18} color="#ffffff" /></div>
            <div className="absolute right-0 bottom-0 w-[17px] h-[17px] rounded-full bg-[#e8524f] flex items-center justify-center"><div className="w-[7px] h-[7px] rounded-full bg-white" /></div>
          </div>
        </TaskItem>
        <TaskItem>
          <svg width="28" height="30" viewBox="0 0 28 30"><path d="M0 0h28v17l-7 7-7 6-7-6-7-7z" fill="#f5c518" /><path d="M21 7H9v11h10v-5h-5" fill="none" stroke="#0b2250" strokeWidth="3.500" /></svg>
        </TaskItem>
        <TaskItem>
          <svg width="28" height="32" viewBox="0 0 28 32"><path d="M14 0l14 8-14 8L0 8z" fill="#6aa84f" /><path d="M0 8l14 8v16L0 24z" fill="#8a6543" /><path d="M28 8L14 16v16l14-8z" fill="#6b4a2f" /><path d="M0 8l14 8 14-8v3l-14 8L0 11z" fill="#4f8f3a" /></svg>
        </TaskItem>
        <TaskItem active>
          <svg width="28" height="28" viewBox="0 0 28 28"><path d="M0 4l16-4v28L0 24z" fill="#1e7145" /><path d="M16 4h12v20H16z" fill="#2a8f5c" /><path d="M19 8h6M19 12h6M19 16h6M19 20h6" stroke="#d9efe2" /><path d="M4 8l6 12M10 8l-6 12" stroke="#ffffff" strokeWidth="2.200" /></svg>
        </TaskItem>
        <TaskItem active>
          <div className="w-[30px] h-[30px] rounded-full bg-[#6e4a9e] border border-[#c7b3e0] flex items-center justify-center"><FaGithub size={22} color="#f2f2f2" /></div>
        </TaskItem>
        <TaskItem current>
          <div className="relative w-[32px] h-[34px] flex items-end">
            <Thumb w={30} h={24} />
            <svg className="absolute left-[6px] top-0" width="24" height="16" viewBox="0 0 24 16"><path d="M1 16V4l6 4h9l6-8v16z" fill="#8b8f93" /><circle cx="9" cy="11" r="1.500" fill="#1a1a1a" /><circle cx="16" cy="11" r="1.500" fill="#1a1a1a" /></svg>
          </div>
        </TaskItem>
      </div>

      {/* system tray */}
      <div className="ml-auto flex items-stretch">
        <div className="w-[60px] flex items-center justify-center">
          <svg width="20" height="20" viewBox="0 0 20 20"><circle cx="7" cy="9" r="3" fill="none" stroke="#ffffff" strokeWidth="1.300" /><circle cx="13" cy="4" r="3" fill="none" stroke="#ffffff" strokeWidth="1.300" /><path d="M1 19c0-4 3-6 6-6s6 2 6 6M11 9c4-1 7 1 8 5" fill="none" stroke="#ffffff" strokeWidth="1.300" /></svg>
        </div>
        <div className="w-[30px] flex items-center justify-center">
          <svg width="18" height="10" viewBox="0 0 18 10"><path d="M1 9l8-8 8 8" fill="none" stroke="#ffffff" strokeWidth="1.200" /></svg>
        </div>
        <div className="w-[30px] flex items-center justify-center"><Cloud size={22} color="#d8dde6" fill="#d8dde6" /></div>
        <div className="w-[30px] flex items-center justify-center"><Cloud size={22} color="#1f86d8" fill="#1f86d8" /></div>
        <div className="w-[30px] flex items-center justify-center">
          <svg width="20" height="12" viewBox="0 0 20 12"><path d="M0 3h3V0h1v3h1V0h1v3h1v2H6v2H3V5H0z" fill="#ffffff" /><rect x="5" y="2" width="13" height="9" fill="none" stroke="#ffffff" /><rect x="6.500" y="3.500" width="10" height="6" fill="#ffffff" /><rect x="18" y="4" width="2" height="5" fill="#ffffff" /></svg>
        </div>
        <div className="w-[30px] flex items-center justify-center">
          <svg width="16" height="16" viewBox="0 0 16 16"><path d="M1 15A14 14 0 0 1 15 1M5 15A10 10 0 0 1 15 5M9 15a6 6 0 0 1 6-6" fill="none" stroke="#c9ced8" strokeWidth="1.100" /><circle cx="13.500" cy="13.500" r="1.600" fill="#ffffff" /></svg>
        </div>
        <div className="w-[30px] flex items-center justify-center"><Volume1 size={22} color="#ffffff" strokeWidth={1.200} /></div>
        <div className="w-[40px] flex items-center justify-center">
          <svg width="30" height="17" viewBox="0 0 30 17"><rect x="0.500" y="0.500" width="29" height="16" fill="none" stroke="#ffffff" /><path d="M3 5h24M3 8h24" stroke="#ffffff" strokeDasharray="1.500 1.500" /><path d="M7 12h16" stroke="#ffffff" /></svg>
        </div>
        <div className="w-[44px] flex flex-col items-center justify-center gap-[5px] text-[15px] leading-[18px]"><span>CES</span><span>CSP</span></div>
        <div className="w-[88px] flex flex-col items-center justify-center gap-[5px] text-[15px] leading-[18px]"><span>9:17</span><span>26.07.2019</span></div>
        <div className="relative w-[48px] flex items-center justify-center">
          <MessageSquareText size={22} color="#0b2250" fill="#ffffff" strokeWidth={1.200} />
          <div className="absolute left-[23px] top-[23px] w-[20px] h-[20px] rounded-full bg-[#17398a] border border-[#5f82c8] text-[13px] leading-[18px] font-bold text-center">9</div>
        </div>
        <div className="w-[17px] flex justify-end pr-[4px]"><div className="w-px h-full bg-[#3a5488]" /></div>
      </div>
    </div>
  );
}

export default function App() {
  return (
    <div className="w-[1920px] h-screen overflow-hidden flex flex-col bg-[#454545] font-['Roboto',sans-serif] text-[#cccccc]">
      <div className="h-[29px] shrink-0 bg-[#19305f] flex items-center text-[15px] text-[#e4e8f0]">
        <div className="relative w-[22px] h-[22px] ml-[3px] mr-[3px] flex items-end">
          <Thumb w={19} h={13} />
          <svg className="absolute left-[5px] top-0" width="14" height="10" viewBox="0 0 14 10"><path d="M1 10V2l3 2h5l4-4v10z" fill="#a9adb2" /></svg>
        </div>
        <span className="whitespace-nowrap pt-px">[kros0001] (imported)-1.0 (Indexed colour 8-bit gamma integer, GIMP built-in sRGB, 1 layer) 12x7 – GIMP</span>
        <div className="ml-auto flex">
          <div className="w-[58px] flex justify-center"><svg width="12" height="12" viewBox="0 0 12 12"><path d="M0 6h12" stroke="#ffffff" /></svg></div>
          <div className="w-[58px] flex justify-center"><svg width="12" height="12" viewBox="0 0 12 12"><path d="M.5 2.500h9v9h-9zM2.500 2.500V.5h9v9h-2" fill="none" stroke="#ffffff" /></svg></div>
          <div className="w-[58px] flex justify-center mr-[3px]"><svg width="13" height="13" viewBox="0 0 13 13"><path d="M.5.5l12 12M12.500.5l-12 12" stroke="#ffffff" /></svg></div>
        </div>
      </div>

      <div className="h-[31px] shrink-0 flex items-center gap-[11.300px] pl-[7px] pt-px text-[15px] text-[#d4d4d4]">
        {MENU.map((m) => <span key={m}>{m}</span>)}
      </div>

      <div className="flex-1 min-h-0 flex">
        <LeftDock />
        <Sash />
        <Center />
        <Sash />
        <div className="w-[256px] shrink-0 flex"><RightDock /></div>
      </div>

      <Taskbar />
    </div>
  );
}
